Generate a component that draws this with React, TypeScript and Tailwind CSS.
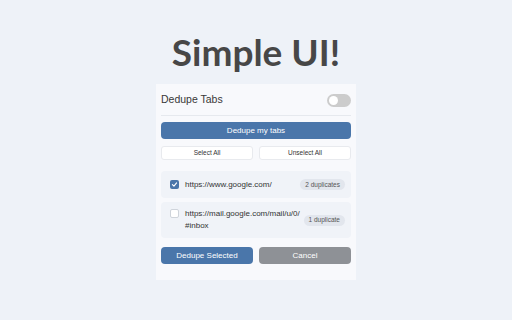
import React from "react";

export default function App() {
  return (
    <div className="w-[512px] h-[320px] bg-[#eef2f8] flex flex-col items-center" style={{ fontFamily: "'Liberation Sans', Arial, sans-serif" }}>
      <h1 className="mt-[30px] h-[44px] text-[37px] leading-[44px] font-bold text-[#474747]" style={{ fontFamily: "Lato, sans-serif" }}>
        Simple UI!
      </h1>
      <div className="mt-[10px] w-[200px] bg-[#f8f9fc] px-[5px] pt-[7px] pb-[16px] flex flex-col">
        <div className="flex items-center justify-between h-[18px] pb-[0px]">
          <span className="text-[10.5px] text-[#383838]">Dedupe Tabs</span>
          <div className="w-[24px] h-[13px] rounded-full bg-[#cccccc] relative mr-[0px]">
            <div className="absolute left-[2px] top-[2px] w-[9px] h-[9px] rounded-full bg-white" />
          </div>
        </div>
        <div className="mt-[6px] h-px bg-[#e6e9ee]" />
        <button className="mt-[6px] h-[17px] rounded-[4px] bg-[#4a76aa] text-white text-[8px] flex items-center justify-center">
          Dedupe my tabs
        </button>
        <div className="mt-[7px] flex gap-[6px]">
          <button className="flex-1 h-[14px] rounded-[3px] bg-white border border-[#e8eaee] text-[6.5px] text-[#333] flex items-center justify-center">
            Select All
          </button>
          <button className="flex-1 h-[14px] rounded-[3px] bg-white border border-[#e8eaee] text-[6.5px] text-[#333] flex items-center justify-center">
            Unselect All
          </button>
        </div>
        <div className="mt-[11px] flex flex-col gap-[4px]">
          <div className="h-[27px] rounded-[4px] bg-[#f0f3f8] flex items-center pl-[9px] pr-[6px]">
            <div className="w-[9px] h-[9px] rounded-[2px] bg-[#4a76aa] flex items-center justify-center">
              <svg width="7" height="7" viewBox="0 0 10 10"><path d="M2 5.2 L4.2 7.3 L8 2.8" stroke="white" strokeWidth="1.6" fill="none" strokeLinecap="round" strokeLinejoin="round" /></svg>
            </div>
            <span className="ml-[6px] text-[8px] text-[#333] flex-1">https://www.google.com/</span>
            <span className="h-[11px] px-[5px] rounded-full bg-[#e2e6ed] text-[6.5px] text-[#555] flex items-center">2 duplicates</span>
          </div>
          <div className="h-[36px] rounded-[4px] bg-[#f0f3f8] flex items-center pl-[9px] pr-[6px]">
            <div className="w-[9px] h-[9px] rounded-[2px] bg-white border border-[#cfd4db] self-start mt-[7px]" />
            <span className="ml-[6px] text-[8px] leading-[12px] text-[#333] flex-1">https://mail.google.com/mail/u/0/<br />#inbox</span>
            <span className="h-[11px] px-[5px] rounded-full bg-[#e2e6ed] text-[6.5px] text-[#555] flex items-center">1 duplicate</span>
          </div>
        </div>
        <div className="mt-[9px] flex gap-[6px]">
          <button className="flex-1 h-[17px] rounded-[4px] bg-[#4a76aa] text-white text-[8px] flex items-center justify-center">
            Dedupe Selected
          </button>
          <button className="flex-1 h-[17px] rounded-[4px] bg-[#8e9196] text-white text-[8px] flex items-center justify-center">
            Cancel
          </button>
        </div>
      </div>
    </div>
  );
}
